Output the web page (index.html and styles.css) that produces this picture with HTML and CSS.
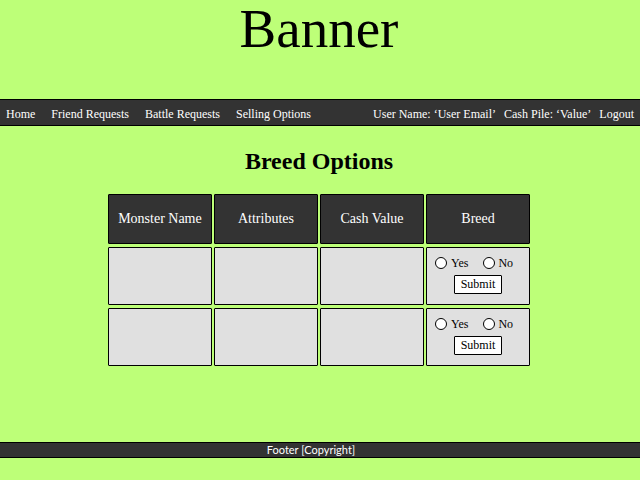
FILE: index.html
```html
<!DOCTYPE html>
<html lang="en">
<head>
<meta charset="utf-8">
<meta name="viewport" content="width=device-width, initial-scale=1">
<title>Breed Options</title>
<link rel="stylesheet" href="styles.css">
</head>
<body>
<header class="banner">Banner</header>
<nav class="bar">
  <div class="links">
    <a href="#home">Home</a>
    <a href="#friends">Friend Requests</a>
    <a href="#battles">Battle Requests</a>
    <a href="#selling">Selling Options</a>
  </div>
  <div class="account">
    <span>User Name: ‘User Email’</span>
    <span>Cash Pile: ‘Value’</span>
    <a href="#logout">Logout</a>
  </div>
</nav>
<main>
  <h1>Breed Options</h1>
  <table class="monsters">
    <thead>
      <tr><th scope="col">Monster Name</th><th scope="col">Attributes</th><th scope="col">Cash Value</th><th scope="col">Breed</th></tr>
    </thead>
    <tbody>
      <tr>
        <td></td><td></td><td></td>
        <td>
          <form class="breed">
            <div class="choices">
              <label><input type="radio" name="breed">Yes</label>
              <label class="no"><input type="radio" name="breed">No</label>
            </div>
            <button type="submit">Submit</button>
          </form>
        </td>
      </tr>
      <tr>
        <td></td><td></td><td></td>
        <td>
          <form class="breed">
            <div class="choices">
              <label><input type="radio" name="breed">Yes</label>
              <label class="no"><input type="radio" name="breed">No</label>
            </div>
            <button type="submit">Submit</button>
          </form>
        </td>
      </tr>
    </tbody>
  </table>
</main>
<footer class="footer">Footer [Copyright]</footer>
</body>
</html>
```
FILE: styles.css
```css
* {
  box-sizing: border-box;
}

body {
  margin: 0;
  min-height: 100vh;
  padding-bottom: 22px;
  display: flex;
  flex-direction: column;
  background: #bdff78;
  color: #000;
  font: 12px/16px "Liberation Serif", "Times New Roman", serif;
}

.banner {
  height: 99px;
  padding-right: 2px;
  font-size: 55px;
  line-height: 58px;
  text-align: center;
}

.bar {
  display: flex;
  justify-content: space-between;
  padding: 6px 6px 3px;
  border: solid #000;
  border-width: 1px 0;
  background: #333;
  color: #fff;
}

.bar a {
  color: inherit;
  text-decoration: none;
}

.links {
  display: flex;
  gap: 16px;
}

.account {
  display: flex;
  gap: 8px;
}

main {
  flex: 1;
  padding-right: 2px;
}

h1 {
  margin: 19px 0 14px;
  font-size: 24px;
  line-height: 32px;
  text-align: center;
}

.monsters {
  width: 66.8%;
  margin: 0 auto;
  table-layout: fixed;
  border-spacing: 2px 3px;
}

.monsters th,
.monsters td {
  padding: 0;
  border: 1px solid #000;
  border-radius: 1px;
}

.monsters th {
  height: 50px;
  background: #333;
  color: #fff;
  font-size: 14px;
  font-weight: normal;
}

.monsters td {
  height: 58px;
  padding-top: 7px;
  background: #e0e0e0;
  vertical-align: top;
}

.breed {
  display: flex;
  flex-direction: column;
  align-items: center;
  gap: 4px;
}

.choices {
  display: flex;
  gap: 15px;
  padding-right: 8px;
}

.choices label {
  display: flex;
  align-items: center;
  gap: 4px;
}

.choices .no {
  gap: 3px;
}

.choices input {
  appearance: none;
  width: 12px;
  height: 12px;
  margin: 0;
  border: 1px solid #000;
  border-radius: 50%;
  background: #fff;
}

.choices input:checked {
  background: radial-gradient(#000 40%, #fff 45%);
}

.breed button {
  padding: 0 6px 1px;
  border: 1px solid #000;
  border-radius: 1px;
  background: #fff;
  color: #000;
  font: inherit;
}

.footer {
  padding-right: 18px;
  border: solid #000;
  border-width: 1px 0;
  background: #333;
  color: #fff;
  font: 11px/14px Lato, sans-serif;
  text-align: center;
}
```
